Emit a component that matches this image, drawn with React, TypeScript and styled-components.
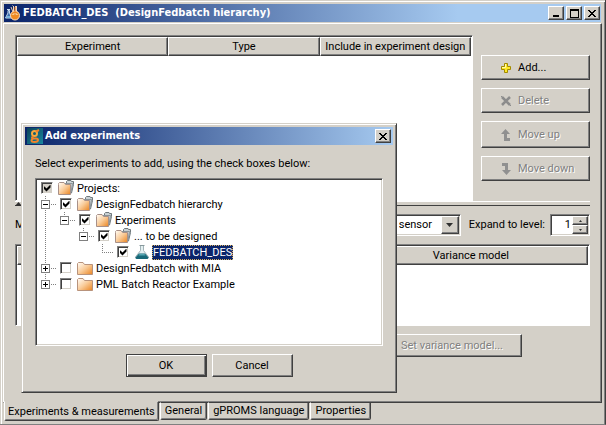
import React from "react";
import styled, { createGlobalStyle, css } from "styled-components";

const face = "#d4d0c8";
const shade = "#808080";
const dark = "#404040";

const GlobalStyle = createGlobalStyle`
  * { box-sizing: border-box; }
  html, body { margin: 0; padding: 0; background: ${face}; }
  body, button, input, select, table {
    font-family: Roboto, Tahoma, sans-serif;
    font-size: 11px;
    line-height: 14px;
    color: #000;
  }
  button, input, select { margin: 0; border-radius: 0; }
`;

const raised = css`
  background: ${face};
  border: 1px solid;
  border-color: #fff ${dark} ${dark} #fff;
  box-shadow: inset -1px -1px 0 ${shade};
`;

const sunken = css`
  background: #fff;
  border: 1px solid;
  border-color: ${shade} #fff #fff ${shade};
  box-shadow: inset 1px 1px 0 ${dark}, inset -1px -1px 0 ${face};
`;

const Window = styled.div`
  position: relative;
  display: flex;
  flex-direction: column;
  min-height: 100vh;
  padding: 4px 3px 3px;
  background: ${face};
  border-right: 1px solid ${dark};
  border-bottom: 1px solid ${shade};
  box-shadow: inset 1px 1px 0 ${face}, inset 2px 2px 0 #fff, inset -1px 0 0 ${shade};
`;

const TitleBar = styled.header<{ $end: string; $inset: number }>`
  display: flex;
  align-items: center;
  gap: 2px;
  height: 18px;
  margin: 0 1px;
  padding: 0 ${(p) => p.$inset}px;
  color: #fff;
  background: linear-gradient(to right, #0a246a, #a6caf0 ${(p) => p.$end});
`;

const Title = styled.h1`
  flex: 1;
  margin: 0;
  font-family: "DejaVu Sans Condensed", "DejaVu Sans", Tahoma, sans-serif;
  font-size: 11px;
  line-height: 14px;
  font-weight: bold;
  white-space: pre;
`;

const CaptionButton = styled.button`
  ${raised}
  display: grid;
  place-items: center;
  width: 16px;
  height: 14px;
  padding: 0;
`;

const Pane = styled.main`
  display: flex;
  flex: 1;
  flex-direction: column;
  gap: 8px;
  margin-top: 1px;
  padding: 11px 11px 45px;
  border: 1px solid;
  border-color: #fff ${dark} ${dark} #fff;
  box-shadow: inset -1px -1px 0 ${shade};
`;

const Upper = styled.section`
  display: flex;
  flex: 1;
  flex-direction: column;
`;

const UpperRow = styled.div`
  display: flex;
  flex: 1;
  gap: 8px;
  min-height: 165px;
`;

const Splitter = styled.div`
  display: flex;
  height: 5px;
  border-top: 1px solid #fff;
  border-bottom: 1px solid ${dark};
`;

const GridBox = styled.div<{ $height?: number }>`
  flex: 1;
  min-height: ${(p) => p.$height ?? 0}px;
  padding: 1px;
  background: #fff;
  border: 1px solid;
  border-color: ${shade} #fff #fff ${shade};
  box-shadow: inset 1px 1px 0 ${dark};
`;

const Grid = styled.table`
  width: 100%;
  table-layout: fixed;
  border-collapse: separate;
  border-spacing: 0;
`;

const HeadCell = styled.th`
  ${raised}
  height: 19px;
  padding: 0;
  font-weight: normal;
  white-space: nowrap;
`;

const Actions = styled.div`
  display: flex;
  flex-direction: column;
  gap: 8px;
  width: 109px;
  padding-top: 20px;
`;

const PushButton = styled.button<{ $height: number; $width?: number }>`
  ${raised}
  display: flex;
  align-items: center;
  justify-content: center;
  width: ${(p) => (p.$width ? `${p.$width}px` : "100%")};
  height: ${(p) => p.$height}px;
  padding: 0;
  white-space: nowrap;
  &:disabled {
    color: ${shade};
    text-shadow: 1px 1px 0 #fff;
  }
`;

const ActionButton = styled(PushButton)`
  justify-content: flex-start;
  gap: 6px;
  padding-left: 18px;
`;

const DefaultButton = styled(PushButton)`
  border-color: ${dark};
  box-shadow: inset 1px 1px 0 #fff, inset -1px -1px 0 ${dark}, inset -2px -2px 0 ${shade};
`;

const Controls = styled.div`
  display: flex;
  align-items: center;
  height: 22px;
`;

const Label = styled.label`
  white-space: nowrap;
`;

const Filler = styled.span`
  flex: 1;
`;

const SelectBox = styled.div`
  ${sunken}
  display: grid;
  width: 68px;
  height: 22px;
  margin-right: 8px;
  padding: 1px;
`;

const Select = styled.select`
  grid-area: 1 / 1;
  appearance: none;
  width: 100%;
  padding: 0 0 0 4px;
  border: 0;
  background: #fff;
`;

const SelectArrow = styled.span`
  ${raised}
  grid-area: 1 / 1;
  justify-self: end;
  display: grid;
  place-items: center;
  width: 18px;
  pointer-events: none;
`;

const Spinner = styled.div`
  ${sunken}
  display: flex;
  width: 40px;
  height: 22px;
  margin-left: 5px;
  padding: 1px;
`;

const SpinInput = styled.input`
  flex: 1;
  min-width: 0;
  padding: 0 1px;
  border: 0;
  text-align: right;
  background: transparent;
`;

const SpinButtons = styled.div`
  display: grid;
  grid-template-rows: 1fr 1fr;
  width: 16px;
`;

const SpinButton = styled.button`
  ${raised}
  display: grid;
  place-items: center;
  min-height: 0;
  padding: 0;
`;

const Lower = styled.div`
  display: flex;
  justify-content: flex-end;
  padding-right: 68px;
`;

const Tabs = styled.nav`
  display: flex;
  align-items: flex-start;
  gap: 1px;
  padding-left: 1px;
`;

const Tab = styled.button<{ $active?: boolean }>`
  height: ${(p) => (p.$active ? 20 : 18)}px;
  margin-top: ${(p) => (p.$active ? -2 : -1)}px;
  padding: ${(p) => (p.$active ? "2px 3px 0" : "0 4px")};
  background: ${face};
  border: 1px solid;
  border-color: ${(p) => (p.$active ? face : dark)} ${dark} ${dark} #fff;
  border-radius: 0 0 2px 2px;
  box-shadow: inset -1px -1px 0 ${shade};
  white-space: nowrap;
`;

const Dialog = styled.section`
  ${raised}
  position: absolute;
  left: 21px;
  top: 123px;
  width: 376px;
  padding: 3px 2px;
  border-color: ${face} ${dark} ${dark} ${face};
  box-shadow: inset 1px 1px 0 #fff, inset -1px -1px 0 ${shade};
`;

const DialogBody = styled.div`
  display: flex;
  flex-direction: column;
  padding: 12px 11px;
`;

const Prompt = styled.p`
  margin: 0 0 7px;
`;

const DialogButtons = styled.div`
  display: flex;
  justify-content: center;
  gap: 5px;
  margin-top: 8px;
`;

const Tree = styled.ul`
  ${sunken}
  height: 168px;
  margin: 0;
  padding: 1px 5px;
  list-style: none;
`;

const TreeRow = styled.li`
  display: flex;
  align-items: center;
  height: 16px;
`;

const dotsY = `repeating-linear-gradient(to bottom, ${shade} 0 1px, transparent 1px 2px)`;
const dotsX = `repeating-linear-gradient(to right, ${shade} 0 1px, transparent 1px 2px)`;

type GuideKind = "pass" | "middle" | "last" | "blank";

const Guide = styled.span<{ $kind: GuideKind }>`
  display: flex;
  align-items: center;
  width: 19px;
  height: 16px;
  background-repeat: no-repeat;
  background-position: 4px 0, 4px 8px;
  background-image: ${(p) =>
    p.$kind === "blank" ? "none" : p.$kind === "pass" ? dotsY : `${dotsY}, ${dotsX}`};
  background-size: ${(p) => (p.$kind === "last" ? "1px 8px" : "1px 16px")}, 11px 1px;
`;

const Expander = styled.button`
  display: grid;
  place-items: center;
  width: 9px;
  height: 9px;
  padding: 0;
  background: #fff;
  border: 1px solid ${shade};
`;

const TreeItem = styled.label`
  display: flex;
  align-items: center;
  height: 16px;
`;

const CheckBox = styled.input<{ $grey?: boolean }>`
  ${sunken}
  appearance: none;
  display: grid;
  place-items: center;
  width: 12px;
  height: 12px;
  margin-right: 5px;
  ${(p) => p.$grey && `background: ${face};`}
  &:checked::before {
    content: "";
    width: 7px;
    height: 7px;
    background: #000;
    clip-path: polygon(0 2px, 1px 2px, 3px 4px, 7px 0, 7px 3px, 3px 7px, 0 4px);
  }
`;

const ItemText = styled.span<{ $selected?: boolean }>`
  margin-left: 2px;
  padding: 1px 1px 0;
  line-height: 14px;
  white-space: nowrap;
  ${(p) =>
    p.$selected &&
    css`
      color: #fff;
      background: #0a246a;
      outline: 1px dotted #d8b060;
      outline-offset: -1px;
    `}
`;

const Folder = ({ open }: { open?: boolean }) => (
  <svg width="16" height="16" viewBox="0 0 16 16" aria-hidden="true">
    <defs>
      <linearGradient id="folderFill" x1="0" y1="0" x2="1" y2="1">
        <stop offset="0.1" stopColor="#fff4e6" />
        <stop offset="0.5" stopColor="#f9cb98" />
        <stop offset="1" stopColor="#ea8420" />
      </linearGradient>
    </defs>
    {open ? (
      <>
        <path d="M8.500 4.500V1.500l1-1H13l.5 1h2v3l-2 8.500h-2z" fill="#c9d0d3" stroke="#6f787c" />
        <path d="M.5 4.500v-1l1-1H6l1.500 2h5v10H.5z" fill="url(#folderFill)" stroke="#a89088" />
        <path d="M7 3.500h7.500l-1.500 9" stroke="#8b9498" fill="none" />
      </>
    ) : (
      <path d="M.5 3.500l1-1H6l1.500 2h8v10H.5z" fill="url(#folderFill)" stroke="#b8937c" />
    )}
  </svg>
);

const Flask = () => (
  <svg width="16" height="16" viewBox="0 0 16 16" aria-hidden="true">
    <path d="M6.500 1.500v5L1.500 13q0 1.500 1.500 1.500h10q1.500 0 1.500-1.500L9.500 6.500v-5" fill="#e4f0f2" stroke="#a4b4b8" />
    <path d="M5 9.500h6l3.500 4q-.5 1.500-1.500 1.500H3q-1.500 0-1.500-1.500z" fill="#176878" />
    <path d="M5.500 10h5l1 1.500h-7z" fill="#55a6b2" />
    <path d="M5.500 1.500h5" stroke="#87989c" />
  </svg>
);

const LabLogo = () => (
  <svg width="16" height="16" viewBox="0 0 16 16" aria-hidden="true">
    <path d="M2 4.500h3M3 5.500h1.500V8L7 13H.5L3 8z" fill="#3d6fae" stroke="#c6d9ee" />
    <path d="M1.500 11h5l.5 2H1z" fill="#7ab4dc" />
    <path d="M6 2l2 5M10.500 1v6M7.500.5l1 1" stroke="#e9c9a8" fill="none" />
    <path d="M8.500 1v6M11.500 1v6" stroke="#f1d8c0" />
    <circle cx="10" cy="10.500" r="4.500" fill="#f08a24" stroke="#f6dcc2" />
    <path d="M7.500 9.500q2.500-2 5 0" stroke="#fff1cf" fill="none" />
    <path d="M9.500 2h1v7h-1z" fill="#e77a24" />
  </svg>
);

const BrandLogo = () => (
  <svg width="16" height="16" viewBox="0 0 16 16" aria-hidden="true">
    <defs>
      <linearGradient id="brandFill" x1="0" y1="0" x2="1" y2="1">
        <stop offset="0" stopColor="#0b4258" />
        <stop offset="1" stopColor="#1b88a0" />
      </linearGradient>
    </defs>
    <path d="M0 0h16v16H0z" fill="url(#brandFill)" />
    <ellipse cx="7.500" cy="5.500" rx="2.500" ry="2.500" fill="none" stroke="#f9a83c" strokeWidth="2" />
    <path d="M9 3.500l3-1.500M6 8.500L5 9.500q0 1 1.500 1h2.500q2 0 2 1.500 0 2-3.500 2-3 0-3-1.500 0-1.500 2-2" fill="none" stroke="#f0832c" strokeWidth="2" />
  </svg>
);

const PlusIcon = () => (
  <svg width="12" height="12" viewBox="0 0 12 12" aria-hidden="true">
    <path d="M4.500 1.500h3v3h3v3h-3v3h-3v-3h-3v-3h3z" fill="#ffe928" stroke="#a28a00" />
    <path d="M5.500 2v3.500H2" stroke="#fffbb0" fill="none" />
  </svg>
);

const DeleteIcon = () => (
  <svg width="12" height="12" viewBox="0 0 12 12" aria-hidden="true">
    <path d="M2 2l8 8M10 2l-8 8" stroke="#8c8c8c" strokeWidth="2.500" />
    <path d="M1 1l1 1M10 10l1 1" stroke="#8c8c8c" />
  </svg>
);

const MoveIcon = ({ down }: { down?: boolean }) => (
  <svg width="12" height="14" viewBox="0 0 12 14" aria-hidden="true">
    {down ? (
      <path d="M2 1h6v7h3L6.500 13 2 8h3V4H2z" fill="#909090" />
    ) : (
      <path d="M5.500 1L10 6H7v4h3v3H4V6H1z" fill="#909090" />
    )}
  </svg>
);

const Triangle = ({ up, size }: { up?: boolean; size: number }) => (
  <svg width={size * 2 - 1} height={size} viewBox={`0 0 ${size * 2 - 1} ${size}`} aria-hidden="true">
    <path
      d={up ? `M0 ${size}h${size * 2 - 1}L${size - 0.5} 0z` : `M0 0h${size * 2 - 1}L${size - 0.5} ${size}z`}
      fill="#303030"
    />
  </svg>
);

const CloseGlyph = () => (
  <svg width="8" height="7" viewBox="0 0 8 7" shapeRendering="crispEdges" aria-hidden="true">
    <path d="M0 0h2v1h1v1h2v-1h1v-1h2v1h-1v1h-1v1h-1v1h1v1h1v1h1v1h-2v-1h-1v-1h-2v1h-1v1h-2v-1h1v-1h1v-1h1v-1h-1v-1h-1v-1h-1z" />
  </svg>
);

const MinimizeGlyph = () => (
  <svg width="9" height="8" viewBox="0 0 9 8" aria-hidden="true">
    <path d="M1 6h6v2H1z" />
  </svg>
);

const MaximizeGlyph = () => (
  <svg width="9" height="9" viewBox="0 0 9 9" aria-hidden="true">
    <path d="M0 0h9v9H0zM1 2v6h7V2z" fillRule="evenodd" />
  </svg>
);

const ExpandGlyph = ({ plus }: { plus?: boolean }) => (
  <svg width="5" height="5" viewBox="0 0 5 5" aria-hidden="true">
    <path d={plus ? "M0 2h5v1H0zM2 0h1v5H2z" : "M0 2h5v1H0z"} />
  </svg>
);

const CaptionGroup = styled.div`
  display: flex;
  gap: 2px;
`;

interface Item {
  text: string;
  guides: GuideKind[];
  box?: "open" | "closed";
  checked: boolean;
  root?: boolean;
  leaf?: boolean;
}

const items: Item[] = [
  { text: "Projects:", guides: [], checked: true, root: true },
  { text: "DesignFedbatch hierarchy", guides: ["middle"], box: "open", checked: true },
  { text: "Experiments", guides: ["pass", "last"], box: "open", checked: true },
  { text: "... to be designed", guides: ["pass", "blank", "last"], box: "open", checked: true },
  { text: "FEDBATCH_DES", guides: ["pass", "blank", "blank", "last"], checked: true, leaf: true },
  { text: "DesignFedbatch with MIA", guides: ["middle"], box: "closed", checked: false },
  { text: "PML Batch Reactor Example", guides: ["last"], box: "closed", checked: false },
];

const ProjectTree = () => (
  <Tree>
    {items.map((item) => (
      <TreeRow key={item.text}>
        {item.guides.map((kind, i) => (
          <Guide key={i} $kind={kind}>
            {item.box && i === item.guides.length - 1 && (
              <Expander aria-label={item.box === "open" ? "Collapse" : "Expand"}>
                <ExpandGlyph plus={item.box === "closed"} />
              </Expander>
            )}
          </Guide>
        ))}
        <TreeItem>
          <CheckBox type="checkbox" defaultChecked={item.checked} $grey={item.root} />
          {item.leaf ? <Flask /> : <Folder open={item.checked} />}
          <ItemText $selected={item.leaf}>{item.text}</ItemText>
        </TreeItem>
      </TreeRow>
    ))}
  </Tree>
);

export default function App() {
  return (
    <>
      <GlobalStyle />
      <Window>
        <TitleBar $end="76%" $inset={1}>
          <LabLogo />
          <Title>{"FEDBATCH_DES  (DesignFedbatch hierarchy)"}</Title>
          <CaptionGroup>
            <CaptionButton aria-label="Minimize"><MinimizeGlyph /></CaptionButton>
            <CaptionButton aria-label="Maximize"><MaximizeGlyph /></CaptionButton>
            <CaptionButton aria-label="Close"><CloseGlyph /></CaptionButton>
          </CaptionGroup>
        </TitleBar>
        <Pane>
          <Upper>
            <UpperRow>
              <GridBox>
                <Grid>
                  <thead>
                    <tr>
                      <HeadCell>Experiment</HeadCell>
                      <HeadCell>Type</HeadCell>
                      <HeadCell>Include in experiment design</HeadCell>
                    </tr>
                  </thead>
                </Grid>
              </GridBox>
              <Actions>
                <ActionButton $height={25}><PlusIcon />Add...</ActionButton>
                <ActionButton $height={25} disabled><DeleteIcon />Delete</ActionButton>
                <ActionButton $height={27} disabled><MoveIcon />Move up</ActionButton>
                <ActionButton $height={25} disabled><MoveIcon down />Move down</ActionButton>
              </Actions>
            </UpperRow>
            <Splitter><Triangle up size={4} /></Splitter>
          </Upper>
          <Controls>
            <Label as="span">M</Label>
            <Filler />
            <SelectBox>
              <Select aria-label="Group by" defaultValue="sensor">
                <option value="sensor">sensor</option>
              </Select>
              <SelectArrow><Triangle size={4} /></SelectArrow>
            </SelectBox>
            <Label htmlFor="level">Expand to level:</Label>
            <Spinner>
              <SpinInput id="level" inputMode="numeric" defaultValue="1" />
              <SpinButtons>
                <SpinButton aria-label="Increase"><Triangle up size={2} /></SpinButton>
                <SpinButton aria-label="Decrease"><Triangle size={2} /></SpinButton>
              </SpinButtons>
            </Spinner>
          </Controls>
          <GridBox $height={82}>
            <Grid>
              <colgroup>
                <col width="59%" />
                <col width="41%" />
              </colgroup>
              <thead>
                <tr>
                  <HeadCell />
                  <HeadCell>Variance model</HeadCell>
                </tr>
              </thead>
            </Grid>
          </GridBox>
          <Lower>
            <PushButton $height={23} $width={140} disabled>Set variance model...</PushButton>
          </Lower>
        </Pane>
        <Tabs>
          <Tab $active>Experiments &amp; measurements</Tab>
          <Tab>General</Tab>
          <Tab>gPROMS language</Tab>
          <Tab>Properties</Tab>
        </Tabs>
        <Dialog role="dialog" aria-labelledby="dialog-title">
          <TitleBar $end="100%" $inset={2}>
            <BrandLogo />
            <Title as="h2" id="dialog-title">Add experiments</Title>
            <CaptionButton aria-label="Close"><CloseGlyph /></CaptionButton>
          </TitleBar>
          <DialogBody>
            <Prompt>Select experiments to add, using the check boxes below:</Prompt>
            <ProjectTree />
            <DialogButtons>
              <DefaultButton $height={23} $width={81}>OK</DefaultButton>
              <PushButton $height={23} $width={81}>Cancel</PushButton>
            </DialogButtons>
          </DialogBody>
        </Dialog>
      </Window>
    </>
  );
}
